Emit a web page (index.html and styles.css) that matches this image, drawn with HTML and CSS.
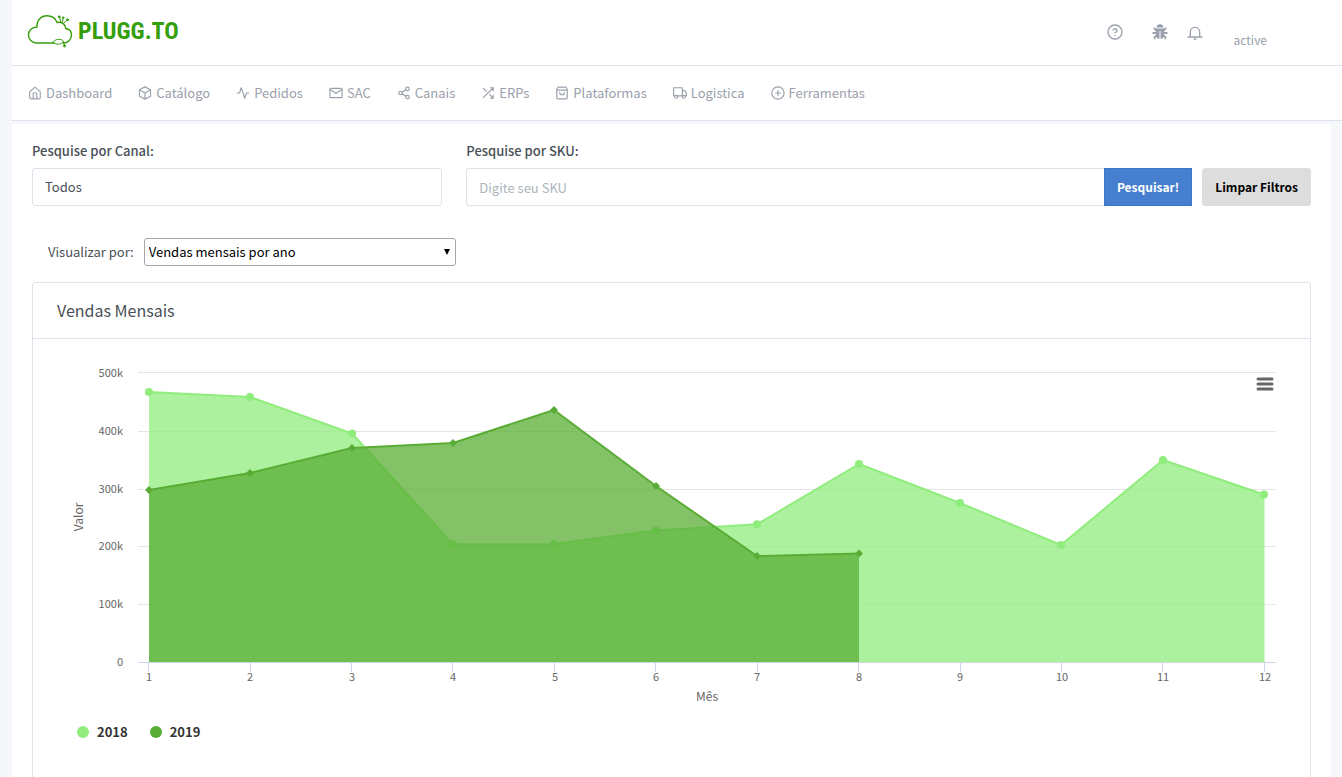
FILE: index.html
```
<!DOCTYPE html>
<html lang="pt-BR">
<head>
<meta charset="utf-8">
<title>Plugg.to</title>
<link rel="stylesheet" href="styles.css">
</head>
<body>
<header class="topbar">
  <a class="brand" href="#">
    <svg class="brand-cloud" viewBox="0 0 46 36" aria-hidden="true">
      <path d="M27 30H9C4.500 29.500 1.500 26 1.500 22C1.500 17.500 5 14 10 14C9.500 7.500 14 2.700 20 2.700C25 2.700 28.500 5.500 30 9.500C34.500 8.500 38.500 11 38.700 15.500C42 16 44.500 18.500 44.500 22C44.500 26.500 41 30 36 30"/>
      <path class="fine" d="M26 29.500C28 25.500 34 25.500 36.500 28C35 32 29 32 26 29.500zM34 9.500L32.500 4.500M35.500 9.500L36 5.500M37 10L40 7M36.500 30L37.500 32"/>
      <g class="brand-dots"><circle cx="32.300" cy="3.800" r="1.400"/><circle cx="36.300" cy="4.600" r="1.200"/><circle cx="40.500" cy="6.800" r="1.400"/><circle cx="37.500" cy="33" r="1.400"/></g>
    </svg>
    <span class="brand-name">PLUGG.TO</span>
  </a>
  <div class="tools">
    <button class="tool" aria-label="Ajuda"><svg class="icon-lg" viewBox="0 0 24 24"><circle cx="12" cy="12" r="10.500"/><path d="M9.100 9a3 3 0 0 1 5.800 1c0 2-3 3-3 3M12 17h.01"/></svg></button>
    <button class="tool" aria-label="Bugs"><svg class="icon-lg" viewBox="0 0 16 16"><path class="solid" d="M4.700 3.500a3.300 3.300 0 0 1 6.600 0zM4 4.500h8V11a4 4 0 0 1-3.500 4V7h-1v8A4 4 0 0 1 4 11z"/><path class="legs" d="M4.500 6.500L2 4M11.500 6.500L14 4M4 9H.5M12 9h3.500M4.500 11.500L2 14.500M11.500 11.500l2.500 3"/></svg></button>
    <button class="tool tool-bell" aria-label="Notificações"><svg class="icon-lg" viewBox="0 0 16 16"><path class="thin" d="M1 12h14M3.300 12V7a4.700 4.700 0 0 1 9.400 0v5"/><path class="solid" d="M6 13.500h4l-2 2z"/></svg></button>
    <a class="account" href="#">active</a>
  </div>
</header>
<nav class="menu">
  <a class="menu-link" href="#"><svg class="icon" viewBox="0 0 24 24"><path d="M3 10l9-8 9 8v10a2 2 0 0 1-2 2H5a2 2 0 0 1-2-2zM9 22V12h6v10"/></svg>Dashboard</a>
  <a class="menu-link" href="#"><svg class="icon" viewBox="0 0 24 24"><path d="M12 1.500l9.500 5v11l-9.500 5-9.500-5v-11zM2.500 6.500L12 12l9.500-5.500M12 12v10.500"/></svg>Catálogo</a>
  <a class="menu-link" href="#"><svg class="icon" viewBox="0 0 24 24"><path d="M22 12h-4l-3 9L9 3l-3 9H2"/></svg>Pedidos</a>
  <a class="menu-link" href="#"><svg class="icon" viewBox="0 0 24 24"><rect x="1.500" y="4" width="21" height="16" rx="2"/><path d="M22 6l-10 7L2 6"/></svg>SAC</a>
  <a class="menu-link" href="#"><svg class="icon" viewBox="0 0 24 24"><circle cx="18" cy="5" r="3"/><circle cx="6" cy="12" r="3"/><circle cx="18" cy="19" r="3"/><path d="M8.600 13.500l6.800 4M15.400 6.500l-6.800 4"/></svg>Canais</a>
  <a class="menu-link" href="#"><svg class="icon" viewBox="0 0 24 24"><path d="M16 3h5v5M4 20L21 3M21 16v5h-5M15 15l6 6M4 4l5 5"/></svg>ERPs</a>
  <a class="menu-link" href="#"><svg class="icon" viewBox="0 0 24 24"><path d="M5 2h14l2 4v14a2 2 0 0 1-2 2H5a2 2 0 0 1-2-2V6zM3 7h18M16 11a4 4 0 0 1-8 0"/></svg>Plataformas</a>
  <a class="menu-link" href="#"><svg class="icon" viewBox="0 0 24 24"><path d="M1 3h15v14H1zM16 8h4l3 4v5h-7"/><circle class="wheel" cx="5.500" cy="18.500" r="2.500"/><circle class="wheel" cx="18.500" cy="18.500" r="2.500"/></svg>Logistica</a>
  <a class="menu-link" href="#"><svg class="icon" viewBox="0 0 24 24"><circle cx="12" cy="12" r="10.500"/><path d="M12 8v8M8 12h8"/></svg>Ferramentas</a>
</nav>
<main class="page">
  <form class="filters">
    <div class="field field-channel">
      <label class="field-label" for="canal">Pesquise por Canal:</label>
      <select class="control" id="canal"><option>Todos</option></select>
    </div>
    <div class="field field-sku">
      <label class="field-label" for="sku">Pesquise por SKU:</label>
      <div class="sku-row">
        <input class="control sku-input" id="sku" type="text" placeholder="Digite seu SKU">
        <button class="btn btn-primary" type="button">Pesquisar!</button>
        <button class="btn btn-clear" type="button">Limpar Filtros</button>
      </div>
    </div>
  </form>
  <div class="view-row">
    <label for="view">Visualizar por:</label>
    <div class="view-box"><select class="view-select" id="view"><option>Vendas mensais por ano</option></select></div>
  </div>
  <section class="card">
    <h1 class="card-title">Vendas Mensais</h1>
    <div class="chart">
      <svg class="plot" viewBox="0 0 1277 372" role="img" aria-label="Vendas mensais por ano">
        <path class="grid" d="M105 33.500H1243M105 92.500H1243M105 150.500H1243M105 207.500H1243M105 265.500H1243"/>
        <path class="area-a" d="M116 323V53L217 58L319 94.500L420 205.300L521 205L623 191.500L724 185.300L826 125L927 164L1028 206L1130 121L1231.500 155.500V323z"/>
        <path class="line-a" d="M116 53L217 58L319 94.500L420 205.300L521 205L623 191.500L724 185.300L826 125L927 164L1028 206L1130 121L1231 155.500"/>
        <g class="dots-a"><circle cx="116" cy="53" r="4"/><circle cx="217" cy="58" r="4"/><circle cx="319" cy="94.500" r="4"/><circle cx="420" cy="205.300" r="4"/><circle cx="521" cy="205" r="4"/><circle cx="623" cy="191.500" r="4"/><circle cx="724" cy="185.300" r="4"/><circle cx="826" cy="125" r="4"/><circle cx="927" cy="164" r="4"/><circle cx="1028" cy="206" r="4"/><circle cx="1130" cy="121" r="4"/><circle cx="1231" cy="155.500" r="4"/></g>
        <path class="area-b" d="M116 323V151L217 134L319 109L420 104L521 71L623 147L724 217L826 214.500V323z"/>
        <path class="line-b" d="M116 151L217 134L319 109L420 104L521 71L623 147L724 217L826 214.500"/>
        <path class="dots-b" d="M116 147l4 4-4 4-4-4zM217 130l4 4-4 4-4-4zM319 105l4 4-4 4-4-4zM420 100l4 4-4 4-4-4zM521 67l4 4-4 4-4-4zM623 143l4 4-4 4-4-4zM724 213l4 4-4 4-4-4zM826 210.500l4 4-4 4-4-4z"/>
        <path class="axis" d="M105 323.500H1243M115.500 324v9M217.500 324v9M318.500 324v9M419.500 324v9M521.500 324v9M622.500 324v9M724.500 324v9M825.500 324v9M927.500 324v9M1028.500 324v9M1129.500 324v9M1231.500 324v9"/>
        <g class="ticks-y"><text x="90" y="38">500k</text><text x="90" y="96">400k</text><text x="90" y="154">300k</text><text x="90" y="211">200k</text><text x="90" y="269">100k</text><text x="90" y="327">0</text></g>
        <g class="ticks-x"><text x="116" y="342">1</text><text x="217" y="342">2</text><text x="319" y="342">3</text><text x="420" y="342">4</text><text x="522" y="342">5</text><text x="623" y="342">6</text><text x="724" y="342">7</text><text x="826" y="342">8</text><text x="927" y="342">9</text><text x="1029" y="342">10</text><text x="1130" y="342">11</text><text x="1232" y="342">12</text></g>
        <text class="axis-title" x="674" y="362">Mês</text>
        <text class="axis-title" transform="translate(50 178) rotate(-90)">Valor</text>
      </svg>
      <button class="chart-menu" aria-label="Opções do gráfico"><svg class="bars" viewBox="0 0 18 14"><path d="M2 2h14M2 7h14M2 12h14"/></svg></button>
      <div class="legend">
        <button class="legend-item"><span class="swatch swatch-a"></span>2018</button>
        <button class="legend-item"><span class="swatch swatch-b"></span>2019</button>
      </div>
    </div>
  </section>
</main>
</body>
</html>
```
FILE: styles.css
```
* { box-sizing: border-box; }
body {
  margin: 0;
  padding-left: 12px;
  background: #f5f7fb;
  color: #495057;
  font: 13px/24px "Noto Sans CJK SC", "Noto Sans", sans-serif;
}
button, input, select { font: inherit; color: inherit; }
button { padding: 0; border: 0; background: none; cursor: pointer; }
a { color: inherit; text-decoration: none; }
svg { fill: none; stroke: currentColor; stroke-width: 2; stroke-linecap: round; stroke-linejoin: round; }

.topbar {
  display: flex;
  justify-content: space-between;
  align-items: center;
  height: 66px;
  padding: 0 75px 2px 15px;
  background: #fff;
  border-bottom: 1px solid #dee2e6;
}
.brand { display: flex; align-items: center; gap: 5px; padding-bottom: 2px; color: #349e0b; }
.brand-cloud { width: 46px; height: 36px; stroke-width: 1.4; }
.brand-cloud .fine { stroke-width: 1; }
.brand-dots { fill: currentColor; stroke: none; }
.brand-name { font: bold 24px/36px "Liberation Sans Narrow", "Roboto Condensed", "DejaVu Sans Condensed", sans-serif; }
.tools { display: flex; align-items: center; color: #9aa0ac; }
.tool { display: flex; margin-right: 19px; }
.tool:first-child { margin-right: 29px; }
.tool-bell { padding-top: 3px; }
.icon-lg { width: 16px; height: 16px; }
.icon-lg .solid { fill: currentColor; stroke: none; }
.icon-lg .legs { stroke-width: 2; stroke-linecap: butt; }
.icon-lg .thin { stroke-width: 1.3; }
.account { margin: 16px 0 0 12px; font-size: 12px; }

.menu {
  display: flex;
  gap: 26px;
  align-items: center;
  height: 55px;
  padding: 0 16px;
  background: #fff;
  border-bottom: 1px solid #dce3ee;
  color: #9aa0ac;
}
.menu-link { display: flex; align-items: center; gap: 4px; }
.icon { width: 14px; height: 14px; }
.wheel { fill: #fff; }

.page { margin: 3px 11px 0 0; padding: 16px 20px 0; background: #fff; }
.filters { display: grid; grid-template-columns: repeat(12, 1fr); column-gap: 24px; }
.field-channel { grid-column: span 4; }
.field-sku { grid-column: span 8; }
.field-label { display: block; margin-bottom: 6px; line-height: 22px; font-weight: 500; }
.control {
  display: block;
  width: 100%;
  height: 38px;
  padding: 0 12px;
  border: 1px solid #dee2ea;
  border-radius: 3px;
  background: #fff;
  appearance: none;
}
.control::placeholder { color: #adb5bd; opacity: 1; }
.sku-row { display: flex; }
.sku-input { flex: 1; border-right: 0; border-radius: 3px 0 0 3px; }
.btn { height: 38px; padding: 0 12px; border: 1px solid; font-size: 12px; font-weight: bold; white-space: nowrap; }
.btn-primary { background: #467fcf; border-color: #3a76cb; color: #fff; }
.btn-clear { margin-left: 10px; background: #ddd; border-color: #ddd; border-radius: 3px; color: #000; }

.view-row { display: flex; align-items: center; gap: 10px; margin: 32px 0 16px; padding-left: 16px; }
.view-box { position: relative; width: 312px; }
.view-box::after {
  content: "";
  position: absolute;
  right: 6px;
  top: 11px;
  border: solid transparent;
  border-width: 6px 3px 0;
  border-top-color: #000;
  pointer-events: none;
}
.view-select {
  display: block;
  width: 100%;
  height: 28px;
  padding: 0 4px;
  border: 1px solid #a6a6a6;
  border-radius: 3px;
  background: #fff;
  color: #000;
  appearance: none;
}

.card { border: 1px solid #dee2ea; border-radius: 3px; }
.card-title {
  margin: 0;
  padding: 15px 24px 16px;
  border-bottom: 1px solid #dee2ea;
  font-size: 16px;
  line-height: 24px;
  font-weight: 400;
}
.chart { position: relative; padding-bottom: 40px; }
.plot { display: block; width: 100%; height: auto; stroke: none; stroke-linecap: butt; }
.plot text { fill: #666; font-size: 11px; }
.grid { stroke: #e6e6e6; stroke-width: 1; }
.axis { stroke: #ccd6eb; stroke-width: 1; }
.area-a { fill: #90ed7d; fill-opacity: .75; }
.line-a { stroke: #90ed7d; }
.dots-a { fill: #90ed7d; }
.area-b { fill: #59ad34; fill-opacity: .75; }
.line-b { stroke: #59ad34; }
.dots-b { fill: #59ad34; }
.ticks-y { text-anchor: end; }
.ticks-x, .axis-title { text-anchor: middle; }
.plot .axis-title { font-size: 12px; }
.chart-menu { position: absolute; top: 38px; right: 36px; display: flex; color: #666; }
.bars { width: 18px; height: 14px; stroke-width: 3; }
.legend { display: flex; gap: 22px; padding: 9px 44px; }
.legend-item { display: flex; align-items: center; gap: 8px; color: #333; font-weight: bold; }
.swatch { width: 12px; height: 12px; border-radius: 50%; }
.swatch-a { background: #90ed7d; }
.swatch-b { background: #59ad34; }
```
